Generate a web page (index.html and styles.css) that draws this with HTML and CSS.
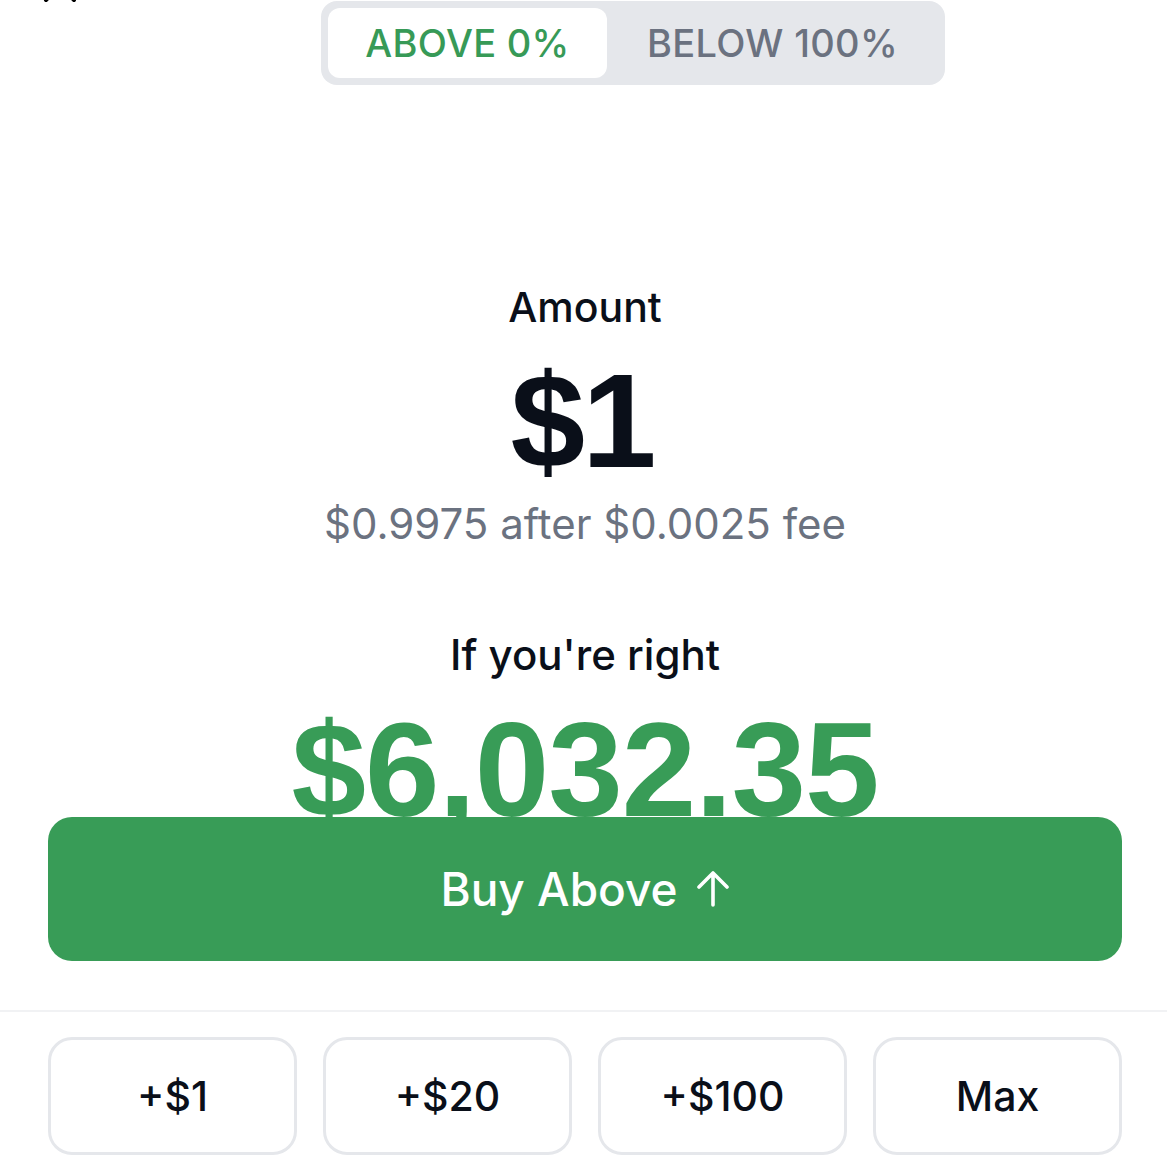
FILE: index.html
```html
<!DOCTYPE html>
<html>
<head>
<meta charset="utf-8">
<link rel="stylesheet" href="styles.css">
</head>
<body>
<div class="page">
  <header class="header">
    <svg class="close" width="36" height="36" viewBox="0 0 36 36"><path d="M4 4 L32 32 M32 4 L4 32" stroke="#000" stroke-width="4" stroke-linecap="round"/></svg>
    <div class="toggle">
      <div class="tab active">ABOVE 0%</div>
      <div class="tab">BELOW 100%</div>
    </div>
  </header>
  <main class="content">
    <div class="label amount-label">Amount</div>
    <div class="big amount">$1</div>
    <div class="sub">$0.9975 after $0.0025 fee</div>
    <div class="label right-label">If you're right</div>
    <div class="big payout">$6,032.35</div>
    <button class="buy">Buy Above
      <svg class="arrow" width="34" height="36" viewBox="0 0 34 36"><path d="M17 34 V3 M3 16 L17 2 L31 16" fill="none" stroke="#fff" stroke-width="3.6" stroke-linecap="round" stroke-linejoin="round"/></svg>
    </button>
  </main>
  <div class="divider"></div>
  <div class="quick">
    <button class="qbtn">+$1</button>
    <button class="qbtn">+$20</button>
    <button class="qbtn">+$100</button>
    <button class="qbtn">Max</button>
  </div>
</div>
</body>
</html>
```
FILE: styles.css
```css
* { box-sizing: border-box; }
html, body { margin: 0; padding: 0; background: #fff; }
body {
  font-family: Inter, "Noto Sans", sans-serif;
  color: #0a0f19;
  width: 1167px;
  height: 1175px;
  overflow: hidden;
}
.page { display: flex; flex-direction: column; }
.header {
  position: relative;
  display: flex;
  justify-content: flex-start;
  padding: 1px 0 0 321px;
}
.close {
  position: absolute;
  left: 42px;
  top: -32px;
}
.toggle {
  display: flex;
  width: 624px;
  height: 84px;
  padding: 7px;
  background: #e5e7eb;
  border-radius: 16px;
}
.tab {
  width: 279px;
  display: flex;
  align-items: center;
  justify-content: center;
  font-size: 38px;
  font-weight: 500;
  letter-spacing: 0.3px;
  color: #6b7280;
  border-radius: 12px;
}
.tab + .tab { flex: 1; }
.tab.active { background: #fff; color: #379a57; }

.content {
  display: flex;
  flex-direction: column;
  align-items: center;
  padding: 0 45px 0 48px;
}
.label {
  font-size: 41px;
  line-height: 48px;
  font-weight: 500;
  color: #0a0f19;
}
.amount-label { margin-top: 198px; }
.right-label { margin-top: 83px; font-size: 42px; }
.big {
  font-family: "Liberation Sans", Arial, sans-serif;
  font-weight: 700;
  font-size: 134px;
  line-height: 134px;
}
.amount { margin-top: 23px; color: #0a0f19; letter-spacing: -3px; padding-right: 6px; }
.sub {
  margin-top: 12px;
  font-size: 42px;
  line-height: 48px;
  color: #6b7280;
}
.payout { margin-top: 24px; color: #389c57; letter-spacing: -1px; }
.buy {
  position: relative;
  margin-top: -20px;
  width: 100%;
  height: 144px;
  border: none;
  border-radius: 24px;
  background: #389c57;
  color: #fff;
  font-family: Inter, sans-serif;
  font-size: 46px;
  font-weight: 500;
  display: flex;
  align-items: center;
  justify-content: center;
  gap: 18px;
}
.divider {
  margin-top: 49px;
  height: 2px;
  background: #f1f2f4;
}
.quick {
  display: grid;
  grid-template-columns: repeat(4, 1fr);
  gap: 26px;
  padding: 25px 45px 0 48px;
}
.qbtn {
  height: 118px;
  background: #fff;
  border: 3px solid #e5e7eb;
  border-radius: 24px;
  font-family: Inter, sans-serif;
  font-size: 41px;
  font-weight: 500;
  color: #0a0f19;
}
```
